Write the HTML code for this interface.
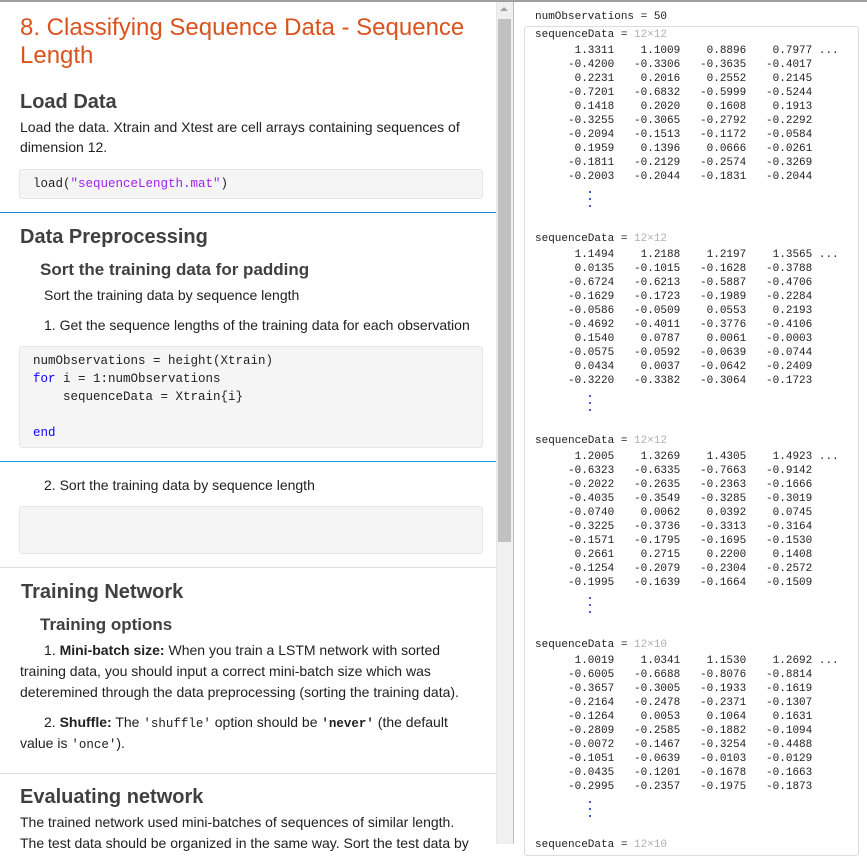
<!DOCTYPE html>
<html><head><meta charset="utf-8"><style>
*{margin:0;padding:0;box-sizing:border-box}
body{width:867px;height:844px;overflow:hidden;background:#fff;font-family:"Liberation Sans",Arial,sans-serif;color:#212121;position:relative}
.a{position:absolute;white-space:nowrap}
.t{font-size:14px;line-height:20px}
.h{font-size:20px;font-weight:bold;color:#404040;line-height:24px}
.h2{font-size:17px;font-weight:bold;color:#404040;line-height:20px}
.code{position:absolute;background:#f5f5f5;border:1px solid #e6e6e6;border-radius:3px}
.m{font-family:"Liberation Mono","DejaVu Sans Mono",monospace;font-size:11px;color:#212121;white-space:pre;line-height:14px;position:absolute}
.cm{font-family:"Liberation Mono","DejaVu Sans Mono",monospace;font-size:12.5px;white-space:pre;line-height:18px;position:absolute}
.g{color:#b0b0b0}
.d{position:absolute;width:2px;height:2px;background:#4060c0}
.ic{font-family:"Liberation Mono",monospace;font-size:12.5px}
</style></head><body>
<div class="a" style="left:0;top:0;width:867px;height:2px;background:#a0a0a0"></div>

<div class="a" style="left:20px;top:14px;font-size:24px;line-height:28px;color:#d9531e">8. Classifying Sequence Data - Sequence</div>
<div class="a" style="left:20px;top:42px;font-size:24px;line-height:28px;color:#d9531e">Length</div>
<div class="a h" style="left:20px;top:90px">Load Data</div>
<div class="a t" style="left:20px;top:117px">Load the data. Xtrain and Xtest are cell arrays containing sequences of</div>
<div class="a t" style="left:20px;top:137px">dimension 12.</div>
<div class="code" style="left:19px;top:169px;width:464px;height:30px"></div>
<div class="cm" style="left:33px;top:175px">load(<span style="color:#a020f0">"sequenceLength.mat"</span>)</div>
<div class="a" style="left:0;top:212px;width:496px;height:1px;background:#1a8ad6"></div>
<div class="a h" style="left:20px;top:225px">Data Preprocessing</div>
<div class="a h2" style="left:40px;top:260px">Sort the training data for padding</div>
<div class="a t" style="left:44px;top:285px">Sort the training data by sequence length</div>
<div class="a t" style="left:44px;top:315px">1. Get the sequence lengths of the training data for each observation</div>
<div class="code" style="left:19px;top:346px;width:464px;height:102px"></div>
<div class="cm" style="left:33px;top:352px">numObservations = height(Xtrain)
<span style="color:#0e00ff">for</span> i = 1:numObservations
    sequenceData = Xtrain{i}

<span style="color:#0e00ff">end</span></div>
<div class="a" style="left:0;top:461px;width:496px;height:1px;background:#1a9de0"></div>
<div class="a t" style="left:44px;top:475px">2. Sort the training data by sequence length</div>
<div class="code" style="left:19px;top:506px;width:464px;height:48px"></div>
<div class="a" style="left:0;top:567px;width:496px;height:1px;background:#dcdcdc"></div>
<div class="a h" style="left:21px;top:580px">Training Network</div>
<div class="a h2" style="left:40px;top:615px">Training options</div>
<div class="a t" style="left:44px;top:640px">1. <b>Mini-batch size:</b> When you train a LSTM network with sorted</div>
<div class="a t" style="left:20px;top:661px">training data, you should input a correct mini-batch size which was</div>
<div class="a t" style="left:20px;top:682px">deteremined through the data preprocessing (sorting the training data).</div>
<div class="a t" style="left:44px;top:712px">2. <b>Shuffle:</b> The <span class="ic">'shuffle'</span> option should be <b class="ic">'never'</b> (the default</div>
<div class="a t" style="left:20px;top:733px">value is <span class="ic">'once'</span>).</div>
<div class="a" style="left:0;top:773px;width:496px;height:1px;background:#dcdcdc"></div>
<div class="a h" style="left:20px;top:785px">Evaluating network</div>
<div class="a t" style="left:20px;top:812px">The trained network used mini-batches of sequences of similar length.</div>
<div class="a t" style="left:20px;top:833px">The test data should be organized in the same way. Sort the test data by</div>

<div class="a" style="left:496px;top:2px;width:17px;height:842px;background:#f0f0f0;border-left:1px solid #e6e6e6"></div>
<div class="a" style="left:498px;top:19px;width:13px;height:523px;background:#c1c1c1"></div>
<div class="a" style="left:500px;top:7px;width:0;height:0;border-left:4px solid transparent;border-right:4px solid transparent;border-bottom:4px solid #a0a0a0"></div>
<div class="a" style="left:513px;top:2px;width:1px;height:842px;background:#bdbdbd"></div>
<div class="a" style="left:524px;top:26px;width:335px;height:830px;border:1px solid #dcdcdc;border-radius:3px"></div>

<div class="m" style="left:535px;top:10px">numObservations = 50</div>

<div class="m" style="left:535px;top:28px">sequenceData = <span class="g">12×12</span></div>
<div class="m" style="left:535px;top:44px">      1.3311    1.1009    0.8896    0.7977 ...
     -0.4200   -0.3306   -0.3635   -0.4017
      0.2231    0.2016    0.2552    0.2145
     -0.7201   -0.6832   -0.5999   -0.5244
      0.1418    0.2020    0.1608    0.1913
     -0.3255   -0.3065   -0.2792   -0.2292
     -0.2094   -0.1513   -0.1172   -0.0584
      0.1959    0.1396    0.0666   -0.0261
     -0.1811   -0.2129   -0.2574   -0.3269
     -0.2003   -0.2044   -0.1831   -0.2044</div>
<div class="d" style="left:589px;top:191px"></div><div class="d" style="left:589px;top:198px"></div><div class="d" style="left:589px;top:205px"></div>

<div class="m" style="left:535px;top:232px">sequenceData = <span class="g">12×12</span></div>
<div class="m" style="left:535px;top:248px">      1.1494    1.2188    1.2197    1.3565 ...
      0.0135   -0.1015   -0.1628   -0.3788
     -0.6724   -0.6213   -0.5887   -0.4706
     -0.1629   -0.1723   -0.1989   -0.2284
     -0.0586   -0.0509    0.0553    0.2193
     -0.4692   -0.4011   -0.3776   -0.4106
      0.1540    0.0787    0.0061   -0.0003
     -0.0575   -0.0592   -0.0639   -0.0744
      0.0434    0.0037   -0.0642   -0.2409
     -0.3220   -0.3382   -0.3064   -0.1723</div>
<div class="d" style="left:589px;top:395px"></div><div class="d" style="left:589px;top:402px"></div><div class="d" style="left:589px;top:409px"></div>

<div class="m" style="left:535px;top:434px">sequenceData = <span class="g">12×12</span></div>
<div class="m" style="left:535px;top:450px">      1.2005    1.3269    1.4305    1.4923 ...
     -0.6323   -0.6335   -0.7663   -0.9142
     -0.2022   -0.2635   -0.2363   -0.1666
     -0.4035   -0.3549   -0.3285   -0.3019
     -0.0740    0.0062    0.0392    0.0745
     -0.3225   -0.3736   -0.3313   -0.3164
     -0.1571   -0.1795   -0.1695   -0.1530
      0.2661    0.2715    0.2200    0.1408
     -0.1254   -0.2079   -0.2304   -0.2572
     -0.1995   -0.1639   -0.1664   -0.1509</div>
<div class="d" style="left:589px;top:597px"></div><div class="d" style="left:589px;top:604px"></div><div class="d" style="left:589px;top:611px"></div>

<div class="m" style="left:535px;top:638px">sequenceData = <span class="g">12×10</span></div>
<div class="m" style="left:535px;top:654px">      1.0019    1.0341    1.1530    1.2692 ...
     -0.6005   -0.6688   -0.8076   -0.8814
     -0.3657   -0.3005   -0.1933   -0.1619
     -0.2164   -0.2478   -0.2371   -0.1307
     -0.1264    0.0053    0.1064    0.1631
     -0.2809   -0.2585   -0.1882   -0.1094
     -0.0072   -0.1467   -0.3254   -0.4488
     -0.1051   -0.0639   -0.0103   -0.0129
     -0.0435   -0.1201   -0.1678   -0.1663
     -0.2995   -0.2357   -0.1975   -0.1873</div>
<div class="d" style="left:589px;top:801px"></div><div class="d" style="left:589px;top:808px"></div><div class="d" style="left:589px;top:815px"></div>
<div class="m" style="left:535px;top:838px">sequenceData = <span class="g">12×10</span></div>
</body></html>
